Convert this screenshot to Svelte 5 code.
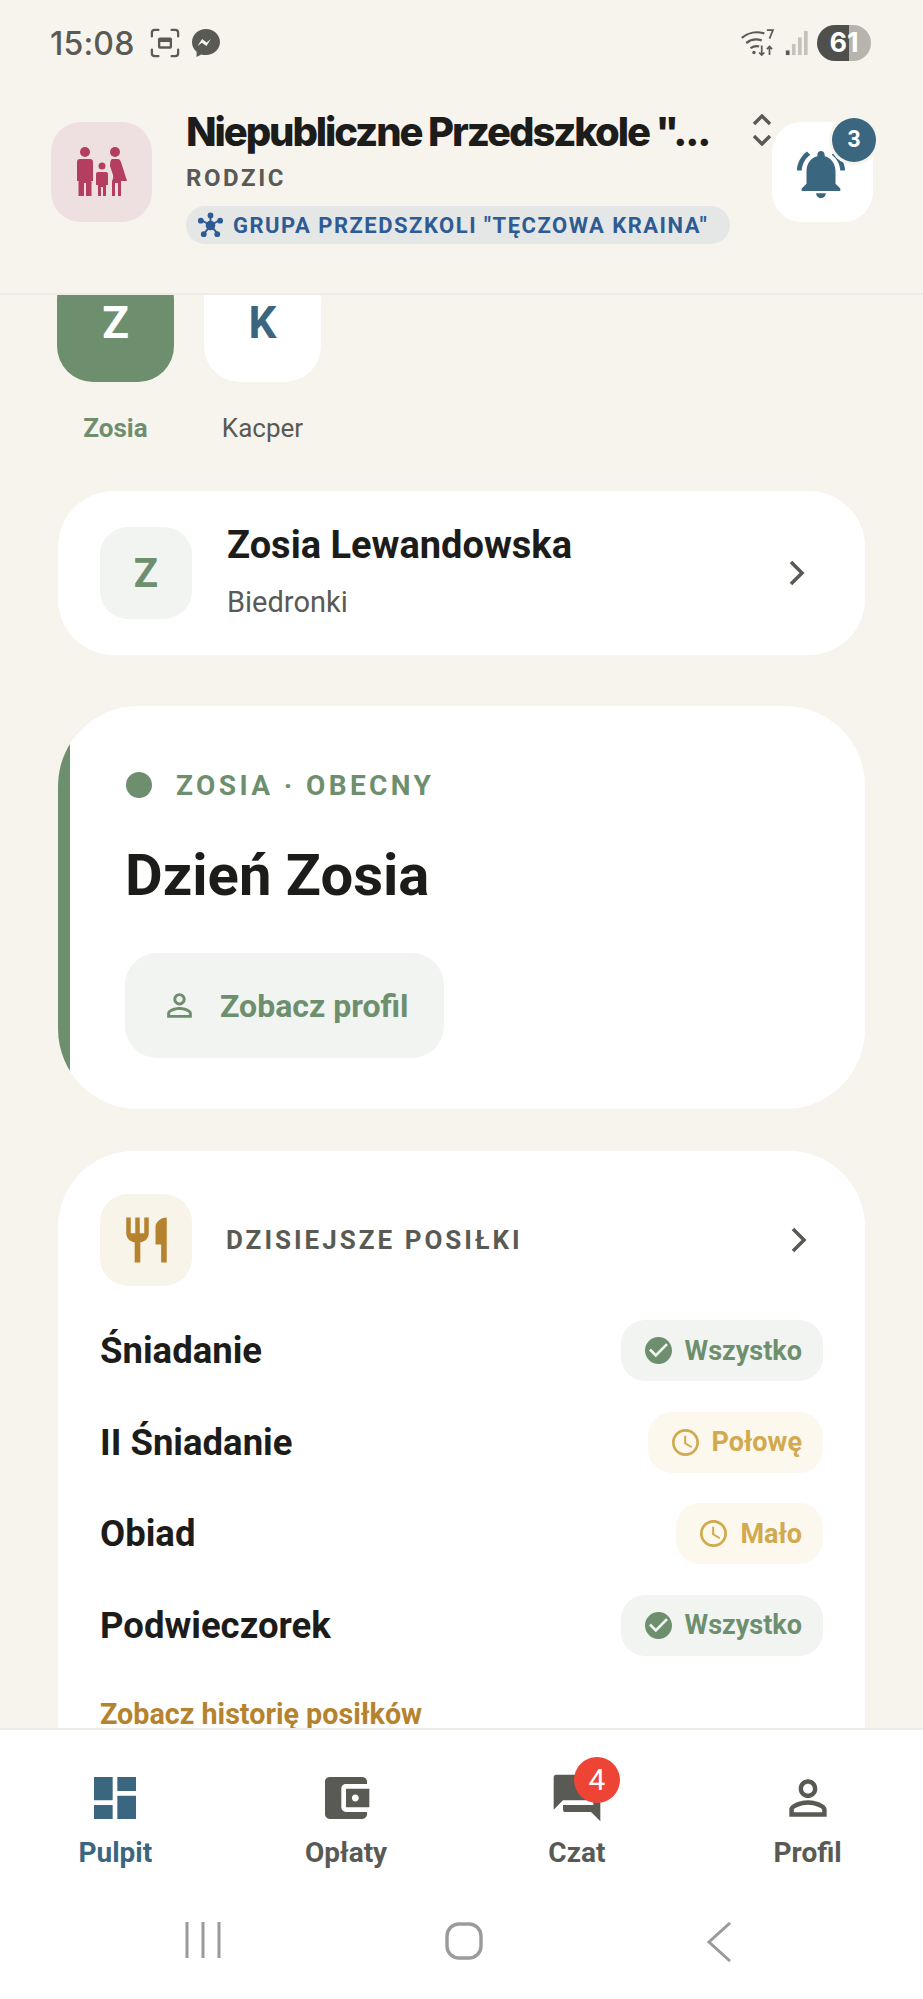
<script>
  const meals = [
    { name: 'Śniadanie', value: 'Wszystko', ok: true },
    { name: 'II Śniadanie', value: 'Połowę', ok: false },
    { name: 'Obiad', value: 'Mało', ok: false },
    { name: 'Podwieczorek', value: 'Wszystko', ok: true }
  ];
  const person = 'M12 5.9c1.16 0 2.1.94 2.1 2.1s-.94 2.1-2.1 2.1S9.9 9.16 9.9 8s.94-2.1 2.1-2.1m0 9c2.97 0 6.1 1.46 6.1 2.1v1.1H5.9V17c0-.64 3.13-2.1 6.1-2.1M12 4C9.79 4 8 5.79 8 8s1.79 4 4 4 4-1.79 4-4-1.79-4-4-4zm0 9c-2.67 0-8 1.34-8 4v3h16v-3c0-2.66-5.33-4-8-4z';
  const tabs = [
    { label: 'Pulpit', active: true, d: 'M3 13h8V3H3v10zm0 8h8v-6H3v6zm10 0h8V11h-8v10zm0-18v6h8V3h-8z' },
    { label: 'Opłaty', d: 'M21 18v1c0 1.1-.9 2-2 2H5c-1.11 0-2-.9-2-2V5c0-1.1.89-2 2-2h14c1.1 0 2 .9 2 2v1h-9c-1.11 0-2 .9-2 2v8c0 1.1.89 2 2 2h9zm-9-2h10V8H12v8zm4-2.5c-.83 0-1.5-.67-1.5-1.5s.67-1.5 1.5-1.5 1.5.67 1.5 1.5-.67 1.5-1.5 1.5z' },
    { label: 'Czat', badge: 4, d: 'M21 6h-2v9H6v2c0 .55.45 1 1 1h11l4 4V7c0-.55-.45-1-1-1zm-4 6V3c0-.55-.45-1-1-1H3c-.55 0-1 .45-1 1v14l4-4h10c.55 0 1-.45 1-1z' },
    { label: 'Profil', d: person }
  ];
</script>

<div class="screen">
  <div class="top">
    <div class="status">
      <span class="time">15:08</span>
      <svg class="shot" viewBox="0 0 32 32" fill="none" stroke="#5a5a55" stroke-width="2.4" stroke-linecap="round">
        <path d="M2 9V5a3 3 0 0 1 3-3h4M23 2h4a3 3 0 0 1 3 3v4M30 23v4a3 3 0 0 1-3 3h-4M9 30H5a3 3 0 0 1-3-3v-4"/>
        <rect x="8.5" y="10" width="15" height="12" rx="2" fill="#5a5a55" stroke="none"/>
        <rect x="11" y="15" width="10" height="4.5" fill="#f7f4ee" stroke="none"/>
      </svg>
      <svg class="msgr" viewBox="0 0 28 28">
        <path fill="#5a5a55" d="M14 0C6.3 0 0 5.8 0 13.2c0 3.9 1.7 7.2 4.6 9.5V28l4.7-2.6c1.5.4 3 .7 4.7.7 7.7 0 14-5.8 14-13S21.700 0 14 0z"/>
        <path fill="#f7f4ee" d="M5.500 17l4.600-7.100 4.500 3.500 4.300-3.500-4.500 7.200-4.500-3.400z"/>
      </svg>
      <span class="grow"></span>
      <svg class="wifi" viewBox="0 0 44 34" fill="none" stroke="#5a5a55" stroke-width="2.600">
        <path d="M1 11C8 5 18 3 27 6M6 17c5-4 12-5 18-3M11 23c3-2 7-3 10-2"/>
        <circle cx="15" cy="28" r="2" fill="#5a5a55" stroke="none"/>
        <path d="M24 20v11m-3-3 3 3 3-3M33 31V21m-3 3 3-3 3 3M30 2h7l-4 10" stroke-width="2"/>
      </svg>
      <svg class="signal" viewBox="0 0 24 28">
        <rect x="0" y="22" width="4" height="5" fill="#5a5a55"/>
        <rect x="6.500" y="15" width="4" height="12" fill="#c4c2bb"/>
        <rect x="13" y="8" width="4" height="19" fill="#c4c2bb"/>
        <rect x="19.500" y="1" width="4" height="26" fill="#c4c2bb"/>
      </svg>
      <span class="battery">61</span>
    </div>

    <header class="head">
      <div class="tile family">
        <svg viewBox="0 0 50 50" width="50" height="50" fill="#b33e60">
          <circle cx="8" cy="5" r="5"/>
          <circle cx="38" cy="5" r="5"/>
          <circle cx="25" cy="19" r="3.500"/>
          <path d="M3 12h10q3 0 3 3v19h-1.500V49H9V36H7V49H1.500V34H0V15q0-3 3-3z"/>
          <path d="M21 25h8q2 0 2 2v11h-2v11h-3V40h-2v9h-3V38h-2V27q0-2 2-2z"/>
          <path d="M35 12h6q2 0 3 3l6 19h-6V49h-3V36h-3V49h-3V34q2-3 1-6l-3-9q0-6 2-7z"/>
        </svg>
      </div>
      <div class="org">
        <div class="org-name">Niepubliczne Przedszkole "...</div>
        <div class="role">RODZIC</div>
        <div class="group">
          <svg viewBox="0 0 28 28" width="27" height="27" fill="#2f5b94" stroke="#2f5b94">
            <path stroke-width="2" d="M14 14V3M14 14l10-6M14 14l8 9M14 14l-7 9M14 14 4 8"/>
            <circle cx="14" cy="14" r="5" stroke="none"/>
            <circle cx="14" cy="3.500" r="3" stroke="none"/>
            <circle cx="24" cy="9" r="3" stroke="none"/>
            <circle cx="21" cy="23" r="3" stroke="none"/>
            <circle cx="7" cy="23" r="3" stroke="none"/>
            <circle cx="4" cy="9" r="3" stroke="none"/>
          </svg>
          <span>GRUPA PRZEDSZKOLI "TĘCZOWA KRAINA"</span>
        </div>
      </div>
      <svg class="switch" viewBox="0 0 20 32" fill="none" stroke="#5a5a55" stroke-width="3.400">
        <path d="M2 10l8-8 8 8M2 22l8 8 8-8"/>
      </svg>
      <div class="tile bell">
        <svg viewBox="0 0 24 24" width="58" height="58" fill="#3b6680">
          <path d="M7.580 4.080 6.150 2.650C3.750 4.480 2.170 7.300 2.030 10.500h2c.15-2.650 1.510-4.970 3.550-6.420zm12.390 6.420h2c-.15-3.200-1.730-6.020-4.120-7.850l-1.420 1.430c2.020 1.450 3.390 3.770 3.540 6.420zM18 11c0-3.070-1.640-5.640-4.500-6.320V4c0-.83-.67-1.500-1.500-1.500s-1.500.67-1.500 1.500v.68C7.630 5.360 6 7.920 6 11v5l-2 2v1h16v-1l-2-2v-5zm-6 11c.14 0 .27-.01.4-.04.65-.14 1.180-.58 1.440-1.180.1-.24.15-.5.15-.78h-4c.01 1.100.9 2 2.010 2z"/>
        </svg>
        <span class="bell-badge">3</span>
      </div>
    </header>
  </div>

  <main class="scroll">
    <div class="kids">
      <div class="kid">
        <div class="kid-av on">Z</div>
        <span class="kid-name on">Zosia</span>
      </div>
      <div class="kid">
        <div class="kid-av">K</div>
        <span class="kid-name">Kacper</span>
      </div>
    </div>

    <section class="card child">
      <div class="sq green">Z</div>
      <div class="child-text">
        <div class="child-name">Zosia Lewandowska</div>
        <div class="child-group">Biedronki</div>
      </div>
      <svg class="chev" viewBox="0 0 16 28" fill="none" stroke="#5a5a55" stroke-width="3.600"><path d="M2 3l11 11L2 25"/></svg>
    </section>

    <section class="card day">
      <div class="state"><i class="dot"></i><span>ZOSIA · OBECNY</span></div>
      <h1>Dzień Zosia</h1>
      <div class="btn">
        <svg viewBox="0 0 24 24" width="37" height="37" fill="#6e8f6e"><path d={person}/></svg>
        <span>Zobacz profil</span>
      </div>
    </section>

    <section class="card meals">
      <div class="meals-head">
        <div class="sq cream">
          <svg viewBox="2 1 20 22" width="45" height="50" fill="#b5832e"><path d="M11 9H9V2H7v7H5V2H3v7c0 2.120 1.660 3.840 3.750 3.970V22h2.500v-9.030C11.340 12.840 13 11.120 13 9V2h-2v7zm5-3v8h2.500v8H21V2c-2.760 0-5 2.240-5 4z"/></svg>
        </div>
        <span class="meals-title">DZISIEJSZE POSIŁKI</span>
        <svg class="chev" viewBox="0 0 16 28" fill="none" stroke="#5a5a55" stroke-width="3.600"><path d="M2 3l11 11L2 25"/></svg>
      </div>
      {#each meals as m}
        <div class="meal">
          <span class="meal-name">{m.name}</span>
          <span class="pill" class:ok={m.ok}>
            {#if m.ok}
              <svg viewBox="2 2 20 20" width="27" height="27" fill="#6e8f6e"><path d="M12 2C6.480 2 2 6.480 2 12s4.480 10 10 10 10-4.480 10-10S17.520 2 12 2zm-2 15l-5-5 1.410-1.410L10 14.170l7.590-7.590L19 8l-9 9z"/></svg>
            {:else}
              <svg viewBox="2 2 20 20" width="27" height="27" fill="#d1a94f"><path d="M11.990 2C6.470 2 2 6.480 2 12s4.470 10 9.990 10C17.520 22 22 17.520 22 12S17.520 2 11.990 2zM12 20c-4.420 0-8-3.580-8-8s3.580-8 8-8 8 3.580 8 8-3.580 8-8 8zm.5-13H11v6l5.250 3.150.75-1.230-4.500-2.670z"/></svg>
            {/if}
            {m.value}
          </span>
        </div>
      {/each}
      <div class="history">Zobacz historię posiłków</div>
    </section>
  </main>

  <nav class="tabs">
    {#each tabs as t}
      <div class="tab" class:active={t.active}>
        <span class="tab-icon">
          <svg viewBox="0 0 24 24" width="56" height="56"><path fill="currentColor" d={t.d}/></svg>
          {#if t.badge}<b class="tab-badge">{t.badge}</b>{/if}
        </span>
        <span class="tab-label">{t.label}</span>
      </div>
    {/each}
  </nav>

  <div class="sysnav">
    <svg width="36" height="36" viewBox="0 0 36 36" stroke="#9b9b9b" stroke-width="3"><path d="M2 0v36M18 0v36M34 0v36"/></svg>
    <svg width="38" height="38" viewBox="0 0 38 38" fill="none" stroke="#9b9b9b" stroke-width="3.400"><rect x="2" y="2" width="34" height="34" rx="12"/></svg>
    <svg width="24" height="40" viewBox="0 0 24 40" fill="none" stroke="#9b9b9b" stroke-width="3"><path d="M23 1 2 20l21 19"/></svg>
  </div>
</div>

<style>
  :global(body) {
    margin: 0;
    background: #f7f4ee;
  }
  .screen {
    width: 923px;
    height: 1999px;
    display: flex;
    flex-direction: column;
    overflow: hidden;
    background: #f7f4ee;
    font-family: Roboto, "Liberation Sans", sans-serif;
    color: #1c1c1a;
  }
  .top {
    height: 295px;
    flex: none;
    box-sizing: border-box;
    border-bottom: 2px solid #eeece6;
    position: relative;
    z-index: 1;
    background: #f7f4ee;
  }
  .status {
    display: flex;
    align-items: center;
    height: 86px;
    padding: 0 52px 0 50px;
    color: #5a5a55;
  }
  .time {
    font-family: Inter, Roboto, sans-serif;
    font-size: 32px;
    font-weight: 500;
    letter-spacing: 0.2px;
    margin-right: 15px;
  }
  .shot { width: 30px; height: 30px; margin-right: 12px; }
  .msgr { width: 28px; height: 28px; }
  .grow { flex: 1; }
  .wifi { width: 38px; height: 30px; margin-right: 6px; }
  .signal { width: 24px; height: 26px; margin-right: 8px; }
  .battery {
    width: 54px;
    height: 36px;
    border-radius: 18px;
    background: linear-gradient(90deg, #4f4f4b 60%, #b6b4ad 60%);
    color: #fff;
    font-family: Inter, Roboto, sans-serif;
    font-weight: 700;
    font-size: 27px;
    line-height: 36px;
    text-align: center;
  }
  .head {
    display: flex;
    align-items: flex-start;
    padding: 26px 50px 0 51px;
  }
  .tile {
    width: 101px;
    height: 100px;
    border-radius: 30px;
    flex: none;
    display: flex;
    align-items: center;
    justify-content: center;
    position: relative;
    box-sizing: border-box;
    margin-top: 10px;
  }
  .family { background: #eee0e0; }
  .bell { background: #fff; }
  .bell svg { margin: 4px 0 0 -3px; }
  .bell-badge {
    position: absolute;
    top: -4px;
    right: -3px;
    width: 44px;
    height: 44px;
    border-radius: 50%;
    background: #3b6680;
    box-shadow: 0 0 0 3px #f7f4ee;
    color: #fff;
    font-size: 23px;
    font-weight: 700;
    line-height: 44px;
    text-align: center;
  }
  .org {
    width: 544px;
    margin-left: 34px;
    flex: none;
  }
  .org-name {
    font-family: Inter, Roboto, sans-serif;
    font-size: 40px;
    line-height: 48px;
    font-weight: 800;
    letter-spacing: -2.100px;
    white-space: nowrap;
    margin-top: -4px;
  }
  .role {
    font-size: 24px;
    line-height: 26px;
    font-weight: 700;
    letter-spacing: 2.600px;
    color: #5a5a55;
    margin-top: 9px;
  }
  .group {
    margin-top: 15px;
    height: 38px;
    border-radius: 19px;
    background: #e5e7e6;
    display: flex;
    align-items: center;
    gap: 9px;
    padding-left: 11px;
    color: #2f5b94;
    font-size: 22px;
    font-weight: 700;
    letter-spacing: 1.500px;
    white-space: nowrap;
  }
  .switch {
    width: 20px;
    height: 32px;
    flex: none;
    margin: 2px 0 0 22px;
  }
  .scroll {
    flex: 1;
    min-height: 0;
    overflow: hidden;
    padding: 0 58px;
  }
  .kids {
    display: flex;
    gap: 30px;
    margin: -31px 0 0 -1px;
  }
  .kid {
    width: 117px;
    display: flex;
    flex-direction: column;
    align-items: center;
  }
  .kid-av {
    width: 117px;
    height: 118px;
    border-radius: 36px;
    background: #fff;
    color: #3b6680;
    font-size: 44px;
    font-weight: 700;
    display: flex;
    align-items: center;
    justify-content: center;
  }
  .kid-av.on { background: #6e8f6e; color: #fff; }
  .kid-name {
    margin-top: 29px;
    font-size: 26px;
    line-height: 34px;
    color: #5a5a55;
  }
  .kid-name.on { color: #6e8f6e; font-weight: 700; }
  .card {
    background: #fff;
    box-sizing: border-box;
    width: 807px;
  }
  .child {
    margin-top: 46px;
    height: 164px;
    border-radius: 56px;
    display: flex;
    align-items: center;
    padding: 0 60px 0 42px;
  }
  .sq {
    width: 92px;
    height: 92px;
    border-radius: 28px;
    flex: none;
    display: flex;
    align-items: center;
    justify-content: center;
  }
  .sq.green {
    background: #f1f4f1;
    color: #6e8f6e;
    font-size: 40px;
    font-weight: 700;
  }
  .sq.cream { background: #f8f4ea; }
  .child-text { margin-left: 35px; flex: 1; }
  .child-name {
    font-size: 38px;
    line-height: 44px;
    font-weight: 700;
    margin-top: -4px;
  }
  .child-group {
    margin-top: 18px;
    font-size: 29px;
    line-height: 34px;
    color: #5a5a55;
  }
  .chev { width: 16px; height: 28px; flex: none; }
  .day {
    margin-top: 51px;
    height: 403px;
    border-radius: 80px;
    padding: 59px 0 0 67px;
    position: relative;
    overflow: hidden;
  }
  .day::before {
    content: "";
    position: absolute;
    left: 0;
    top: 0;
    bottom: 0;
    width: 12px;
    background: #6e8f6e;
  }
  .state {
    display: flex;
    align-items: center;
    gap: 24px;
    height: 40px;
    padding-left: 1px;
    color: #6e8f6e;
    font-size: 28px;
    font-weight: 700;
    letter-spacing: 3.400px;
  }
  .dot {
    width: 26px;
    height: 26px;
    border-radius: 50%;
    background: #6e8f6e;
  }
  h1 {
    margin: 35px 0 0;
    font-size: 58px;
    line-height: 70px;
    font-weight: 700;
  }
  .btn {
    margin-top: 43px;
    width: 319px;
    height: 105px;
    border-radius: 32px;
    background: #f1f4f1;
    display: flex;
    align-items: center;
    gap: 22px;
    padding-left: 36px;
    box-sizing: border-box;
    color: #6e8f6e;
    font-size: 32px;
    font-weight: 700;
  }
  .meals {
    margin-top: 42px;
    border-radius: 76px 76px 0 0;
    padding: 43px 42px 0;
    height: 640px;
  }
  .meals-head {
    display: flex;
    align-items: center;
    margin-bottom: 34px;
    padding-right: 16px;
  }
  .meals-title {
    flex: 1;
    margin-left: 34px;
    font-size: 26px;
    font-weight: 700;
    letter-spacing: 3px;
    color: #5a5a55;
  }
  .meal {
    display: flex;
    align-items: center;
    justify-content: space-between;
    height: 61px;
    margin-bottom: 30.5px;
  }
  .meal-name {
    font-size: 36.5px;
    font-weight: 700;
  }
  .pill {
    height: 61px;
    border-radius: 24px;
    padding: 0 21px 0 24px;
    display: flex;
    align-items: center;
    gap: 13px;
    background: #fcf8ee;
    color: #d1a94f;
    font-size: 27px;
    font-weight: 700;
  }
  .pill.ok {
    background: #f1f4f1;
    color: #6e8f6e;
  }
  .history {
    margin-top: 41px;
    font-size: 28.7px;
    line-height: 34px;
    font-weight: 700;
    color: #b5832e;
  }
  .tabs {
    flex: none;
    height: 155px;
    background: #fff;
    border-top: 2px solid #eeece6;
    display: flex;
    box-sizing: border-box;
    position: relative;
  }
  .tab {
    flex: 1;
    display: flex;
    flex-direction: column;
    align-items: center;
    padding-top: 40px;
    color: #5a5a55;
  }
  .tab.active { color: #3b6680; }
  .tab-icon { position: relative; height: 56px; display: block; }
  .tab-label {
    margin-top: 10px;
    font-size: 28px;
    line-height: 34px;
    font-weight: 700;
  }
  .tab-badge {
    position: absolute;
    top: -13px;
    right: -15px;
    width: 46px;
    height: 46px;
    border-radius: 50%;
    background: #ee4436;
    color: #fff;
    font-size: 30px;
    font-weight: 400;
    line-height: 46px;
    text-align: center;
  }
  .sysnav {
    flex: none;
    height: 116px;
    box-sizing: border-box;
    background: #fff;
    display: flex;
    align-items: flex-start;
    padding: 39px 192px 0 185px;
    justify-content: space-between;
  }
</style>
